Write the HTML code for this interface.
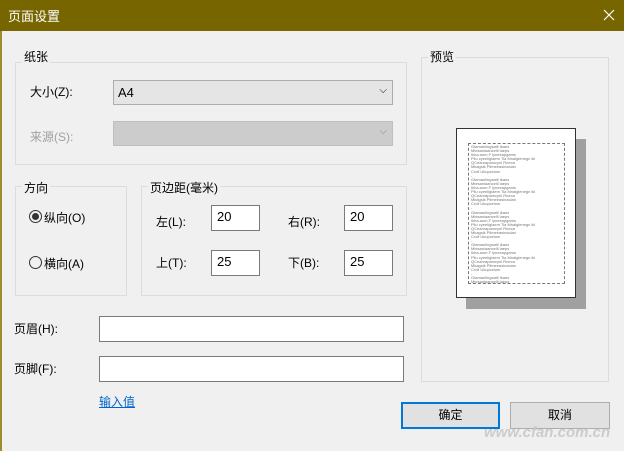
<!DOCTYPE html>
<html><head><meta charset="utf-8"><style>
*{margin:0;padding:0;box-sizing:border-box}
body{width:624px;height:451px;background:#f0f0f0;font-family:"Liberation Sans","Noto Sans CJK SC",sans-serif;font-size:12px;color:#000;position:relative;overflow:hidden}
.a{position:absolute}
.title{left:0;top:0;width:624px;height:31px;background:#776600;color:#fff;font-size:13px}
.grp{border:1px solid #dcdcdc}
.lbl{background:#f0f0f0;padding:0 2px}
.inp{background:#fff;border:1px solid #7a7a7a;padding:3px 5px;font-size:13px}
.sel{background:#e5e5e5;border:1px solid #adadad;padding:4px 4px;font-size:13px}
.btn{background:#e1e1e1;border:1px solid #adadad;text-align:center;line-height:24px;font-size:12px}
.pv{font-size:4px;line-height:4.1px;color:#777;white-space:nowrap}
</style></head><body>
<div class="a" style="left:0;top:31px;width:2px;height:420px;background:#a08a30"></div>
<div class="a title"><span class="a" style="left:8px;top:6px">页面设置</span>
<svg class="a" style="left:603px;top:9px" width="12" height="12"><path d="M1 1L11 11M11 1L1 11" stroke="#fff" stroke-width="1.2"/></svg></div>

<div class="a grp" style="left:15px;top:62px;width:392px;height:103px"></div>
<span class="a lbl" style="left:22px;top:48px">纸张</span>
<span class="a" style="left:30px;top:83px">大小(Z):</span>
<div class="a sel" style="left:113px;top:80px;width:280px;height:25px">A4<span class="a" style="right:5px;top:4px;font-size:10px">⌵</span></div>
<span class="a" style="left:30px;top:128px;color:#a0a0a0">来源(S):</span>
<div class="a sel" style="left:113px;top:121px;width:280px;height:25px;background:#ccc;border-color:#bfbfbf"><span class="a" style="right:5px;top:4px;font-size:10px;color:#888">⌵</span></div>

<div class="a grp" style="left:15px;top:186px;width:112px;height:110px"></div>
<span class="a lbl" style="left:22px;top:179px">方向</span>
<div class="a" style="left:29px;top:210px;width:13px;height:13px;border:1px solid #333;border-radius:50%"><div class="a" style="left:2px;top:2px;width:7px;height:7px;border-radius:50%;background:#333"></div></div>
<span class="a" style="left:44px;top:209px">纵向(O)</span>
<div class="a" style="left:29px;top:256px;width:13px;height:13px;border:1px solid #333;border-radius:50%"></div>
<span class="a" style="left:44px;top:255px">横向(A)</span>

<div class="a grp" style="left:141px;top:186px;width:266px;height:110px"></div>
<span class="a lbl" style="left:148px;top:179px">页边距(毫米)</span>
<span class="a" style="left:156px;top:213px">左(L):</span>
<div class="a inp" style="left:211px;top:205px;width:49px;height:26px">20</div>
<span class="a" style="left:288px;top:213px">右(R):</span>
<div class="a inp" style="left:344px;top:205px;width:49px;height:26px">20</div>
<span class="a" style="left:156px;top:254px">上(T):</span>
<div class="a inp" style="left:211px;top:250px;width:49px;height:26px">25</div>
<span class="a" style="left:288px;top:254px">下(B):</span>
<div class="a inp" style="left:344px;top:250px;width:49px;height:26px">25</div>

<span class="a" style="left:14px;top:320px">页眉(H):</span>
<div class="a inp" style="left:99px;top:316px;width:305px;height:26px"></div>
<span class="a" style="left:14px;top:360px">页脚(F):</span>
<div class="a inp" style="left:99px;top:356px;width:305px;height:26px"></div>
<span class="a" style="left:99px;top:393px;color:#0066cc;text-decoration:underline">输入值</span>

<div class="a grp" style="left:421px;top:57px;width:188px;height:325px"></div>
<span class="a lbl" style="left:428px;top:48px">预览</span>
<div class="a" style="left:466px;top:139px;width:120px;height:170px;background:#a0a0a0"></div>
<div class="a" style="left:456px;top:128px;width:120px;height:170px;background:#fff;border:1px solid #333"></div>
<div class="a pv" style="left:468px;top:143px;width:97px;height:141px;border:1px dashed #777;padding:1px 2px;overflow:hidden">
Gtamanlingsatil Ikaes<br>Mtesanlaancelil laeps<br>Ikha.aom.F lyneeapgams<br>Pilu cyeeliglaem Tia Mnalglenegn ikl<br>QCeanrapamcynl Rneca<br>Mkagsik Pilmeeasinacian<br>Croll Ukupcelum<br>-<br>
Gtamanlingsatil Ikaes<br>Mtesanlaancelil laeps<br>Ikha.aom.F lyneeapgams<br>Pilu cyeeliglaem Tia Mnalglenegn ikl<br>QCeanrapamcynl Rneca<br>Mkagsik Pilmeeasinacian<br>Croll Ukupcelum<br>-<br>
Gtamanlingsatil Ikaes<br>Mtesanlaancelil laeps<br>Ikha.aom.F lyneeapgams<br>Pilu cyeeliglaem Tia Mnalglenegn ikl<br>QCeanrapamcynl Rneca<br>Mkagsik Pilmeeasinacian<br>Croll Ukupcelum<br>-<br>
Gtamanlingsatil Ikaes<br>Mtesanlaancelil laeps<br>Ikha.aom.F lyneeapgams<br>Pilu cyeeliglaem Tia Mnalglenegn ikl<br>QCeanrapamcynl Rneca<br>Mkagsik Pilmeeasinacian<br>Croll Ukupcelum<br>-<br>
Gtamanlingsatil Ikaes<br>Mtesanlaancelil laeps</div>

<div class="a btn" style="left:401px;top:402px;width:99px;height:27px;border:2px solid #0078d7;line-height:23px">确定</div>
<div class="a btn" style="left:510px;top:402px;width:100px;height:27px">取消</div>
<span class="a" style="left:484px;top:424px;color:#ccc;font-style:italic;font-weight:bold;font-size:15px">www.cfan.com.cn</span>
</body></html>
